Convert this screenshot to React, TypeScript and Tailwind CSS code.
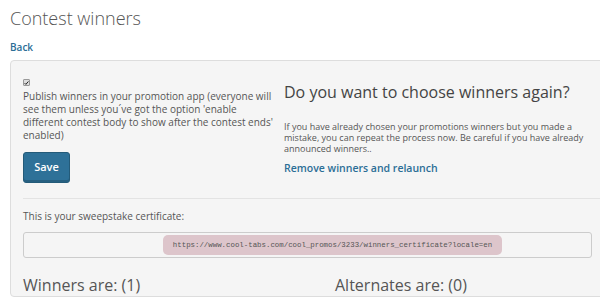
export default function App() {
  const certificateUrl = 'https://www.cool-tabs.com/cool_promos/3233/winners_certificate?locale=en';

  return (
    <div className="w-[600px] h-[303px] overflow-hidden bg-white pl-[10px] font-['Open_Sans',sans-serif] text-[#555]">
      <h1 className="pt-[5px] text-[18px] leading-[26px] font-light text-[#555]">Contest winners</h1>
      <a href="#" className="mt-[9px] block text-[10px] leading-[14px] font-semibold text-[#2b6e96]">
        Back
      </a>

      {/* Panel */}
      <div className="mt-[6px] w-[595px] rounded-[4px] border border-[#ddd] bg-[#f5f5f5] px-[12px] pt-[18px]">
        <div className="grid grid-cols-[261px_1fr]">
          <div>
            <div className="flex h-[7px] w-[7px] items-center justify-center rounded-[1px] border border-[#999] bg-[#ddd]">
              <svg viewBox="0 0 8 8" className="h-[6px] w-[6px]">
                <path d="M1 4.2 L3 6.2 L7 1.5" fill="none" stroke="#222" strokeWidth="1.6" />
              </svg>
            </div>
            <p className="mt-[4px] w-[250px] text-[10px] leading-[13px]">
              Publish winners in your promotion app (everyone will see them unless you´ve got the option 'enable
              different contest body to show after the contest ends' enabled)
            </p>
            <button className="mt-[10px] h-[31px] w-[47px] rounded-[3px] border border-[#245b79] bg-[#2e7198] text-[11px] font-semibold text-white shadow-[inset_0_-2px_0_rgba(0,0,0,0.15)]">
              Save
            </button>
          </div>
          <div className="pt-[1px]">
            <h2 className="text-[16px] leading-[24px] text-[#444]">Do you want to choose winners again?</h2>
            <p className="mt-[17px] w-[305px] text-[9px] leading-[11px]">
              If you have already chosen your promotions winners but you made a mistake, you can repeat the process
              now. Be careful if you have already announced winners..
            </p>
            <a href="#" className="mt-[7px] block text-[10.5px] leading-[14px] font-semibold text-[#2b6e96]">
              Remove winners and relaunch
            </a>
          </div>
        </div>

        <hr className="mt-[15px] mr-[-12px] border-t border-[#e3e3e3]" />

        <p className="mt-[10px] text-[10px] leading-[14px]">This is your sweepstake certificate:</p>
        <div className="mt-[9px] flex h-[26px] items-center justify-center rounded-[3px] border border-[#ccc] bg-[#f5f5f5] pl-[50px]">
          <span className="rounded-[5px] bg-[#ddc5cb] px-[10px] py-[5px] font-['Liberation_Mono',monospace] text-[7.4px] leading-[10px] text-[#555]">
            {certificateUrl}
          </span>
        </div>

        <div className="mt-[16px] grid grid-cols-[312px_1fr] text-[16px] leading-[22px]">
          <h3>Winners are: (1)</h3>
          <h3>Alternates are: (0)</h3>
        </div>
      </div>
    </div>
  );
}
